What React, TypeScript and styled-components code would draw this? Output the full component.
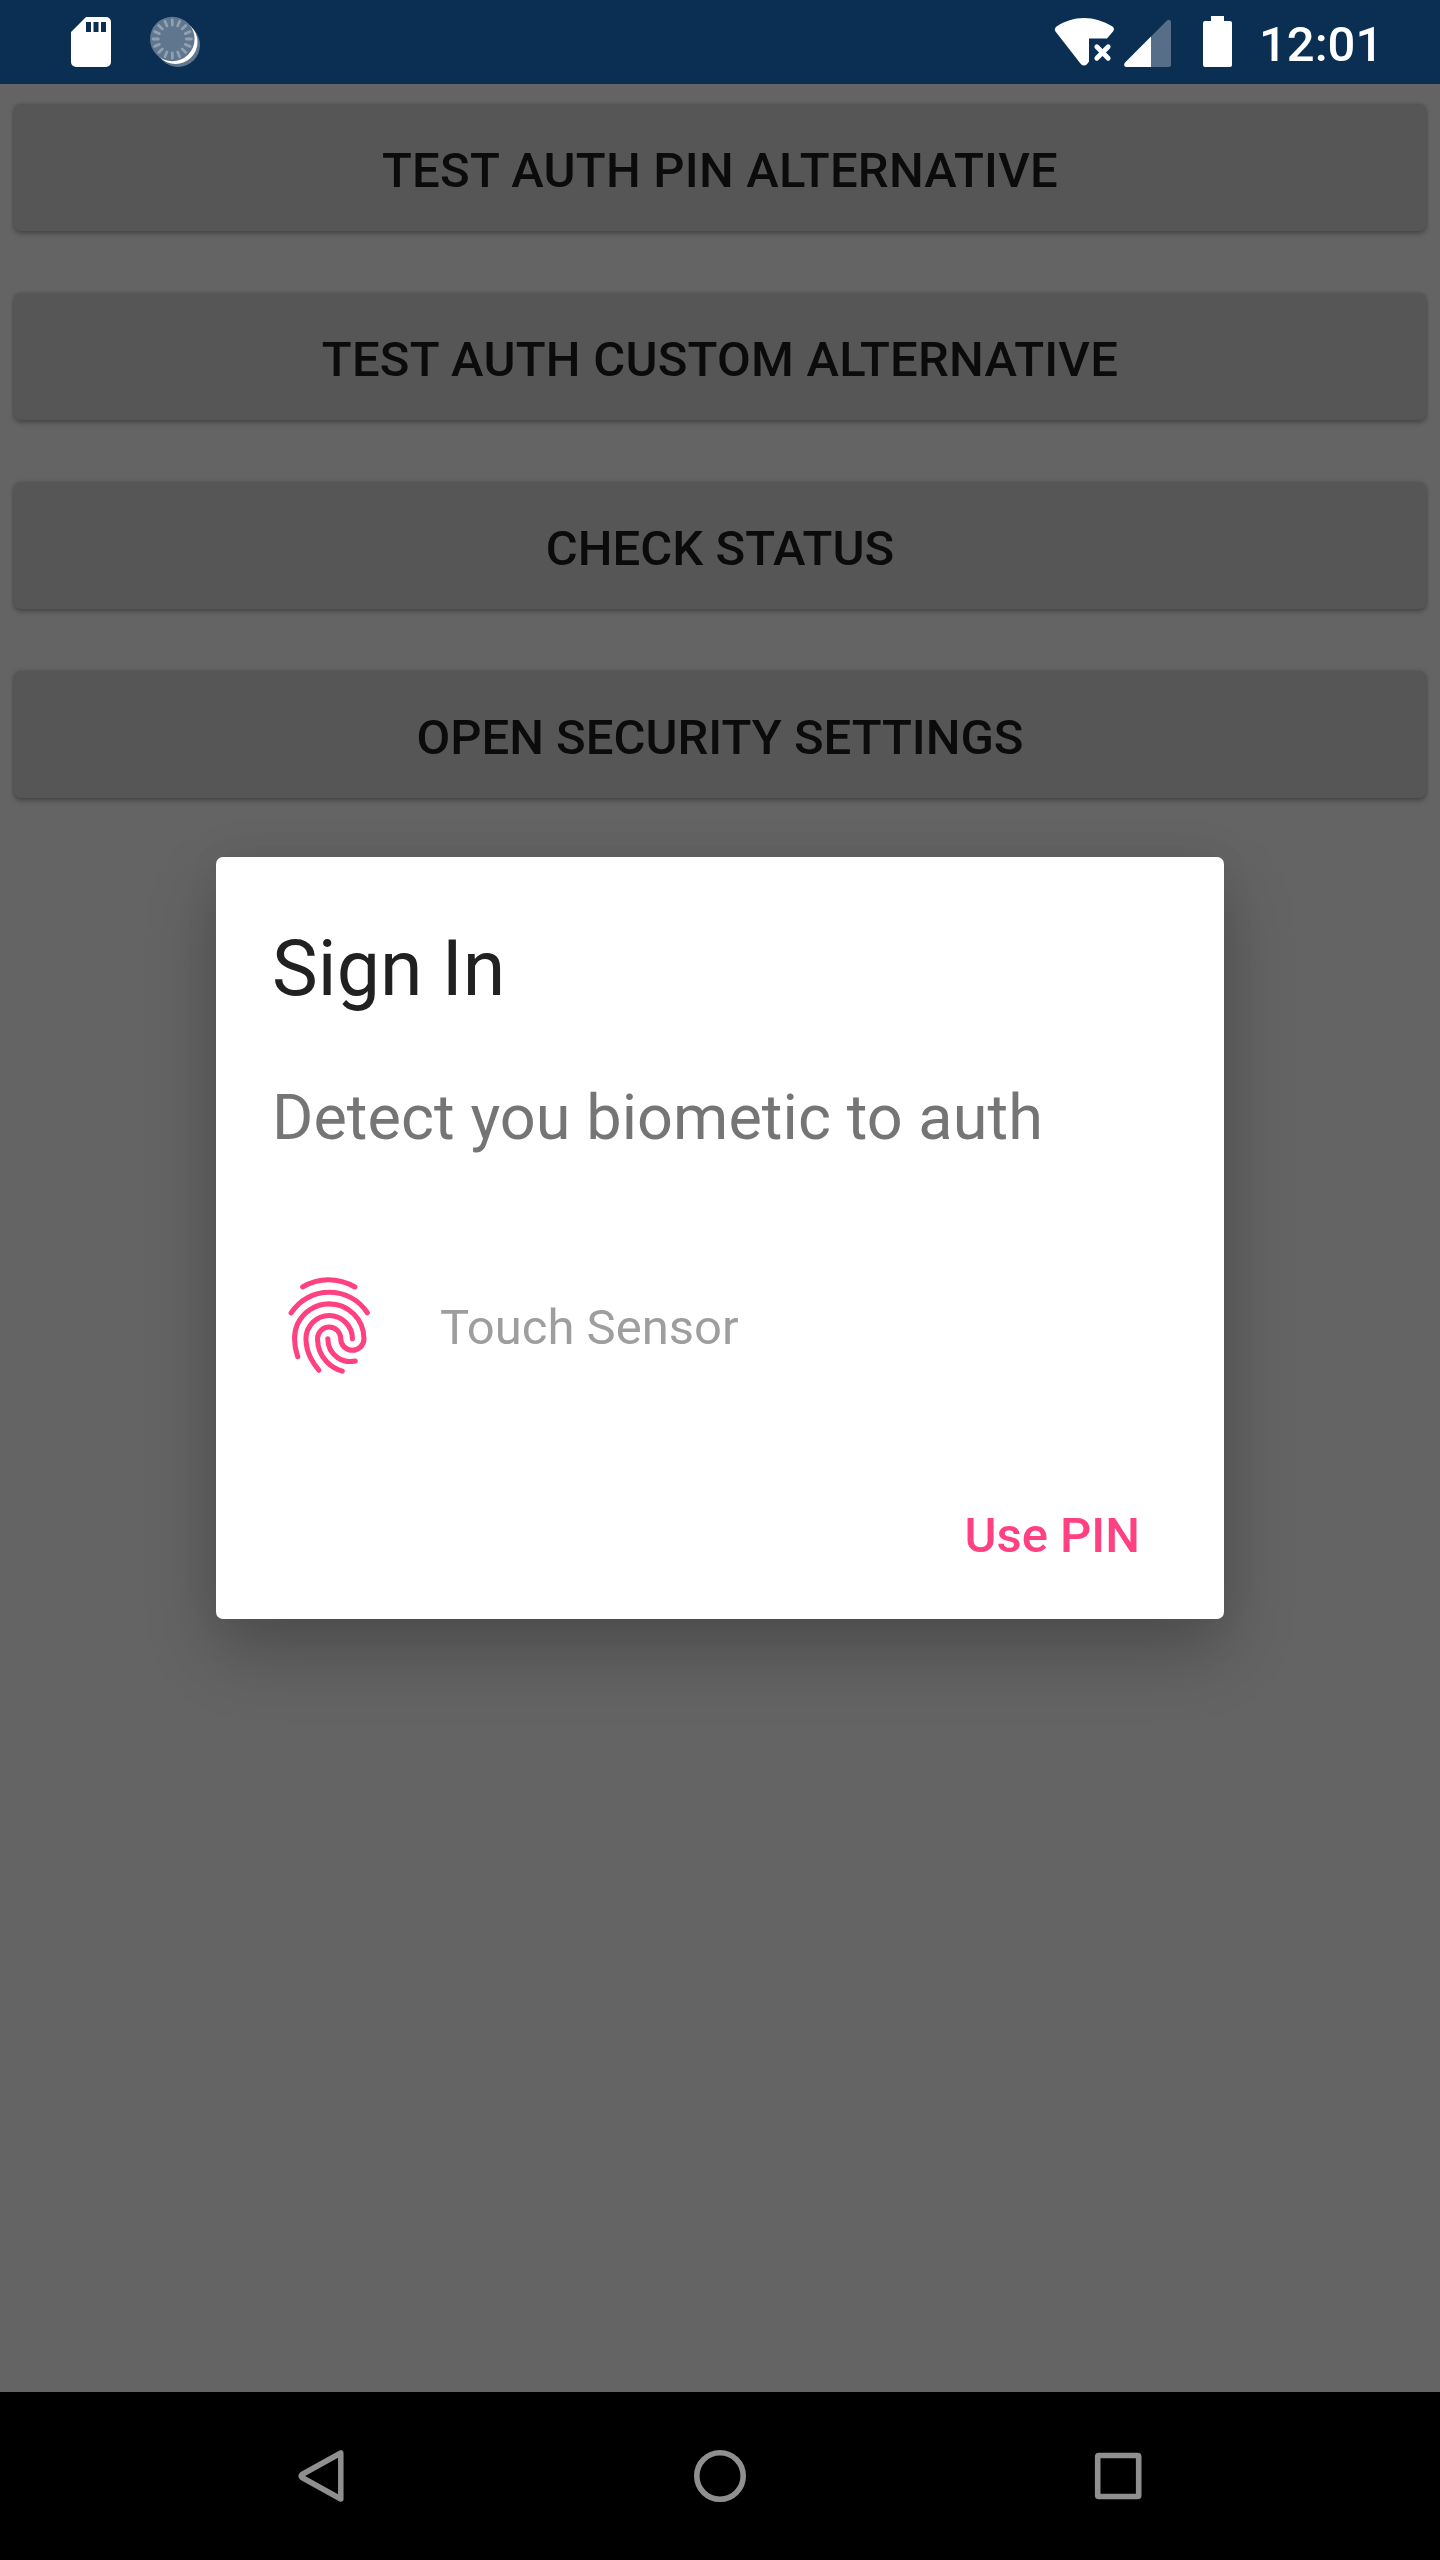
import React from "react";
import styled, { createGlobalStyle } from "styled-components";

const Global = createGlobalStyle`
  html, body { margin: 0; padding: 0; background: #646464; }
  *, *::before, *::after { box-sizing: border-box; }
  button { font: inherit; border: 0; padding: 0; background: none; }
`;

const Screen = styled.div`
  position: relative;
  display: flex;
  flex-direction: column;
  width: 1440px;
  height: 2560px;
  overflow: hidden;
  background: #646464;
  font-family: Roboto, "Noto Sans", sans-serif;
`;

const StatusBar = styled.header`
  display: flex;
  justify-content: space-between;
  flex: none;
  height: 84px;
  padding: 0 60px 0 70px;
  background: #0a2f53;
`;

const StatusGroup = styled.div`
  display: flex;
  align-items: flex-start;
`;

const Icon = styled.svg<{ $gap?: number }>`
  display: block;
  flex: none;
  margin-left: ${(p) => p.$gap ?? 0}px;
`;

const Clock = styled.time`
  width: 121px;
  margin-left: 25px;
  padding-top: 16px;
  color: #fff;
  font-size: 49px;
  font-weight: 500;
  line-height: 57px;
  white-space: nowrap;
`;

const Content = styled.main`
  display: flex;
  flex: 1;
  flex-direction: column;
  gap: 62px;
  padding: 20px 14px;
`;

const RaisedButton = styled.button<{ $tracking: number }>`
  flex: none;
  height: 127px;
  padding-top: 6px;
  border-radius: 7px;
  background: #565656;
  box-shadow: 0 3px 5px rgba(0, 0, 0, 0.24), 0 0 4px rgba(0, 0, 0, 0.16);
  color: #0b0b0b;
  font-size: 49px;
  font-weight: 500;
  line-height: 57px;
  letter-spacing: ${(p) => p.$tracking}px;
  text-transform: uppercase;
`;

const Dialog = styled.section`
  position: absolute;
  top: 857px;
  left: 216px;
  display: flex;
  flex-direction: column;
  width: 1008px;
  height: 762px;
  padding: 67px 56px 21px;
  border-radius: 7px;
  background: #fff;
  box-shadow: 0 32px 70px rgba(0, 0, 0, 0.24), 0 0 40px rgba(0, 0, 0, 0.04);
`;

const Title = styled.h1`
  margin: 0;
  color: #212121;
  font-size: 77px;
  font-weight: 400;
  line-height: 90px;
  letter-spacing: 0.1px;
`;

const Description = styled.p`
  margin: 67px 0 0;
  color: #757575;
  font-size: 63px;
  line-height: 74px;
  letter-spacing: 0.06px;
`;

const SensorRow = styled.div`
  display: flex;
  align-items: center;
  gap: 56px;
  height: 112px;
  margin-top: 117px;
`;

const SensorHint = styled.span`
  color: #9e9e9e;
  font-size: 49px;
  line-height: 58px;
`;

const Actions = styled.footer`
  display: flex;
  justify-content: flex-end;
  margin-top: auto;
`;

const TextButton = styled.button`
  height: 125px;
  padding: 0 28px;
  color: #ff4081;
  font-size: 49px;
  font-weight: 500;
  line-height: 57px;
`;

const NavBar = styled.nav`
  display: flex;
  align-items: center;
  justify-content: center;
  gap: 344px;
  flex: none;
  height: 168px;
  background: #000;
`;

const SdCard = () => (
  <Icon width="42" height="84" viewBox="70 0 42 84">
    <path
      fill="#fff"
      fillRule="evenodd"
      d="M86 17H106a5 5 0 0 1 5 5V62a5 5 0 0 1-5 5H76a5 5 0 0 1-5-5V32ZM86 22V32H91V22ZM93.500 22V32H98.500V22ZM101 22V32H106V22Z"
    />
  </Icon>
);

const TICKS = Array.from({ length: 16 }, (_, i) => i * 22.5);

const Spinner = () => (
  <Icon $gap={34} width="60" height="84" viewBox="146 0 60 84">
    <circle cx="178" cy="45" r="22" fill="#60768e" />
    <circle cx="175.500" cy="42" r="22" fill="#fff" />
    <circle cx="172.300" cy="39" r="22.300" fill="#60768e" />
    {TICKS.map((a) => (
      <path
        key={a}
        d="M172.300 19.800V25"
        stroke="#8fa1b1"
        strokeWidth="2.800"
        strokeLinecap="round"
        transform={`rotate(${a} 172.300 39)`}
      />
    ))}
  </Icon>
);

const Wifi = () => (
  <Icon width="62" height="84" viewBox="1054 0 62 84">
    <path
      fill="#fff"
      d="M1055.500 31.500Q1053.600 29 1056.500 26.500C1065 21 1074 18 1084 18S1103 21 1112.500 26.500Q1115 28.500 1113.200 31.200L1107 38.500H1089V61.500L1087 64.200Q1084 67 1081 64.200Z"
    />
    <path d="M1096.800 46.800L1108.200 58.200M1108.200 46.800L1096.800 58.200" stroke="#fff" strokeWidth="4.800" strokeLinecap="round" />
  </Icon>
);

const Signal = () => (
  <Icon $gap={8} width="48" height="84" viewBox="1124 0 48 84">
    <path fill="#566e87" d="M1151 36.500L1166.500 21Q1169.500 18.500 1171 21.500V64.500Q1171 67 1168.500 67H1151Z" />
    <path fill="#fff" d="M1151 36.500V67H1126Q1123 66 1124.800 62.800Z" />
  </Icon>
);

const Battery = () => (
  <Icon $gap={31} width="31" height="84" viewBox="1203 0 31 84">
    <path fill="#fff" d="M1211 16H1224V21H1230Q1232 21 1232 23V65Q1232 67 1230 67H1205Q1203 67 1203 65V23Q1203 21 1205 21H1211Z" />
  </Icon>
);

const Fingerprint = () => (
  <Icon width="112" height="112" viewBox="-49.530 -49.850 32 32" fill="none" stroke="#ff4081" strokeWidth="1.450" strokeLinecap="round">
    <path d="M-25.850-45.580c-2.271-1.313-4.714-2.070-7.562-2.070s-5.233.780-7.344 2.070" />
    <path d="M-44.065-38.167c1.190-1.774 2.675-3.245 4.559-4.273s4.045-1.611 6.342-1.611c2.288 0 4.440.579 6.318 1.599s3.361 2.480 4.553 4.242" />
    <path d="M-42.191-25.676c-.758-2.144-.897-3.869-.897-5.129 0-1.461.249-2.848.815-4.097 1.562-3.450 5.034-5.851 9.068-5.851 5.494 0 9.948 4.454 9.948 9.948 0 1.832-1.485 3.316-3.316 3.316s-3.316-1.485-3.316-3.316-1.485-3.316-3.316-3.316-3.316 1.485-3.316 3.316c0 2.570.990 4.887 2.605 6.587 1.222 1.286 2.431 2.100 4.476 2.690" />
    <path d="M-36.141-21.784c-1.005-1.193-1.575-1.918-2.365-3.502-.828-1.659-1.314-3.492-1.314-5.485 0-3.663 2.969-6.632 6.632-6.632s6.632 2.969 6.632 6.632" />
    <path d="M-25.740-24.414c-.569.106-1.127.141-1.455.141-1.297 0-2.532-.343-3.620-1.124-1.677-1.203-2.770-3.170-2.770-5.392" />
  </Icon>
);

const BackIcon = () => (
  <Icon width="54" height="56" viewBox="295 2448 54 56">
    <path d="M340.800 2453V2499L302 2477.500Q300.500 2476 302 2474.500Z" fill="none" stroke="#8f8f8f" strokeWidth="5.500" strokeLinejoin="round" />
  </Icon>
);

const HomeIcon = () => (
  <Icon width="54" height="56" viewBox="0 0 54 56">
    <circle cx="27" cy="28" r="23.200" fill="none" stroke="#8f8f8f" strokeWidth="5.600" />
  </Icon>
);

const RecentsIcon = () => (
  <Icon width="54" height="56" viewBox="0 0 54 56">
    <rect x="6.700" y="7.500" width="41" height="41" rx="1" fill="none" stroke="#8f8f8f" strokeWidth="5.600" />
  </Icon>
);

const ACTIONS = [
  { label: "Test auth pin alternative", tracking: 0.23 },
  { label: "Test auth custom alternative", tracking: 0.23 },
  { label: "Check status", tracking: 0.05 },
  { label: "Open security settings", tracking: 0 },
];

export default function App() {
  return (
    <>
      <Global />
      <Screen>
        <StatusBar>
          <StatusGroup>
            <SdCard />
            <Spinner />
          </StatusGroup>
          <StatusGroup>
            <Wifi />
            <Signal />
            <Battery />
            <Clock>12:01</Clock>
          </StatusGroup>
        </StatusBar>
        <Content>
          {ACTIONS.map(({ label, tracking }) => (
            <RaisedButton key={label} $tracking={tracking}>
              {label}
            </RaisedButton>
          ))}
        </Content>
        <NavBar>
          <BackIcon />
          <HomeIcon />
          <RecentsIcon />
        </NavBar>
        <Dialog role="dialog">
          <Title>Sign In</Title>
          <Description>Detect you biometic to auth</Description>
          <SensorRow>
            <Fingerprint />
            <SensorHint>Touch Sensor</SensorHint>
          </SensorRow>
          <Actions>
            <TextButton>Use PIN</TextButton>
          </Actions>
        </Dialog>
      </Screen>
    </>
  );
}
